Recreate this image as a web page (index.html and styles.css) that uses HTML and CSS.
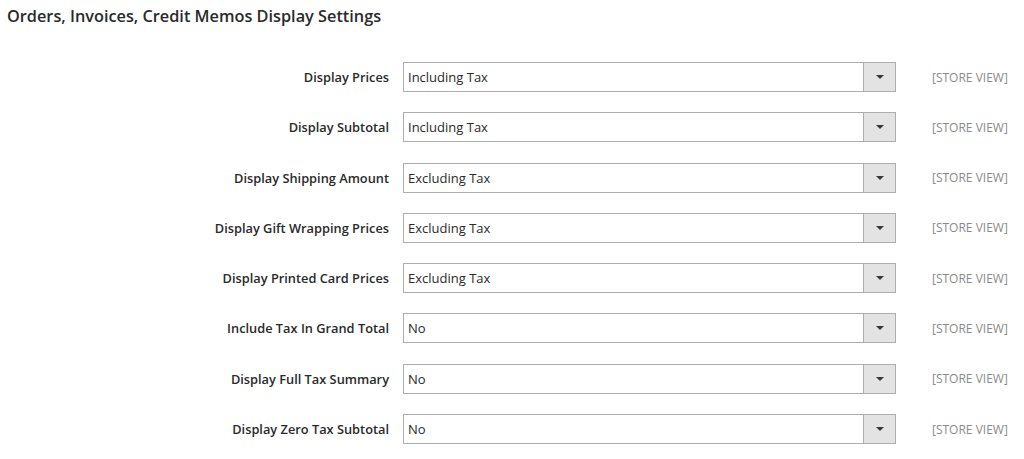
FILE: index.html
```html
<!DOCTYPE html>
<html>
<head>
<meta charset="utf-8">
<link rel="stylesheet" href="styles.css">
</head>
<body>
<div class="section">
  <h2 class="title">Orders, Invoices, Credit Memos Display Settings</h2>
  <div class="form">
    <label class="label">Display Prices</label>
    <div class="select"><span class="value">Including Tax</span><span class="arrow"></span></div>
    <span class="scope">[STORE VIEW]</span>

    <label class="label">Display Subtotal</label>
    <div class="select"><span class="value">Including Tax</span><span class="arrow"></span></div>
    <span class="scope">[STORE VIEW]</span>

    <label class="label">Display Shipping Amount</label>
    <div class="select"><span class="value">Excluding Tax</span><span class="arrow"></span></div>
    <span class="scope">[STORE VIEW]</span>

    <label class="label">Display Gift Wrapping Prices</label>
    <div class="select"><span class="value">Excluding Tax</span><span class="arrow"></span></div>
    <span class="scope">[STORE VIEW]</span>

    <label class="label">Display Printed Card Prices</label>
    <div class="select"><span class="value">Excluding Tax</span><span class="arrow"></span></div>
    <span class="scope">[STORE VIEW]</span>

    <label class="label">Include Tax In Grand Total</label>
    <div class="select"><span class="value">No</span><span class="arrow"></span></div>
    <span class="scope">[STORE VIEW]</span>

    <label class="label">Display Full Tax Summary</label>
    <div class="select"><span class="value">No</span><span class="arrow"></span></div>
    <span class="scope">[STORE VIEW]</span>

    <label class="label">Display Zero Tax Subtotal</label>
    <div class="select"><span class="value">No</span><span class="arrow"></span></div>
    <span class="scope">[STORE VIEW]</span>
  </div>
</div>
</body>
</html>
```
FILE: styles.css
```css
html, body {
  margin: 0;
  padding: 0;
  background: #ffffff;
}
body {
  font-family: "Open Sans", "Liberation Sans", sans-serif;
  color: #303030;
}
.section {
  padding: 0 0 0 7px;
}
.title {
  margin: 0;
  padding-top: 5px;
  font-size: 16.3px;
  line-height: 22px;
  font-weight: 600;
  color: #2a2a2a;
}
.form {
  display: grid;
  grid-template-columns: 382px 493px auto;
  column-gap: 14px;
  row-gap: 20.3px;
  align-items: center;
  margin-top: 35px;
}
.label {
  text-align: right;
  font-size: 12.8px;
  font-weight: 600;
  color: #2a2a2a;
}
.select {
  display: flex;
  align-items: stretch;
  height: 30px;
  box-sizing: border-box;
  border: 1px solid #adadad;
  background: #fff;
}
.value {
  flex: 1;
  display: flex;
  align-items: center;
  padding-left: 4px;
  font-size: 13px;
  color: #2a2a2a;
}
.arrow {
  width: 31px;
  border-left: 1px solid #adadad;
  background: #e3e3e3;
  position: relative;
}
.arrow::after {
  content: "";
  position: absolute;
  left: 50%;
  top: 50%;
  margin-left: -4px;
  margin-top: -2px;
  border-left: 4px solid transparent;
  border-right: 4px solid transparent;
  border-top: 4px solid #41362f;
}
.scope {
  margin-left: 22px;
  font-size: 12px;
  color: #8a8a8a;
  white-space: nowrap;
}
```
